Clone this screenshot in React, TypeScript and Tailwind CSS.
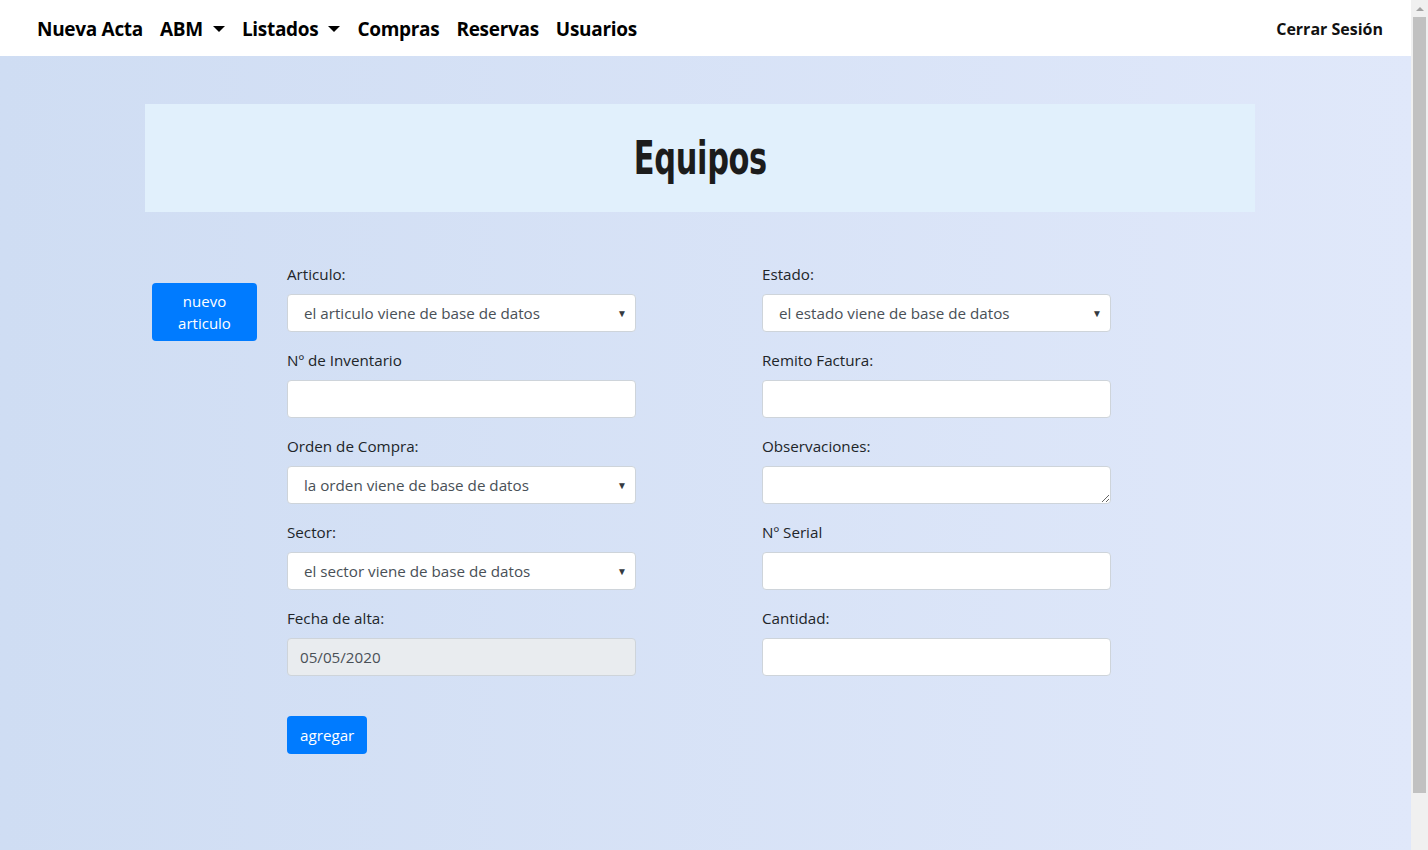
import { useState } from 'react';

const FONT = { fontFamily: '"Open Sans", "Noto Sans", Arial, sans-serif' };

function Caret() {
    return <span className="inline-block ml-[10px] align-middle border-t-[6px] border-t-black border-x-[6px] border-x-transparent mb-[3px]" />;
}

function SelectBox({ text }: { text: string }) {
    return (
        <div className="flex items-center h-[38px] bg-white rounded-[4px] border border-[#ced4da] pl-[16px] pr-[8px] text-[15.2px] text-[#495057]">
            <span className="flex-1">{text}</span>
            <span className="text-[10px] text-[#343a40]">▼</span>
        </div>
    );
}

function Field({ label, children }: { label: string; children: React.ReactNode }) {
    return (
        <div className="flex flex-col">
            <label className="h-[37px] pt-[7px] text-[15.2px] text-[#212529] leading-[20px]">{label}</label>
            {children}
        </div>
    );
}

const inputCls = 'h-[38px] bg-white rounded-[4px] border border-[#ced4da] px-3 outline-none';

export default function App() {
    const [obs, setObs] = useState('');

    return (
        <div className="flex w-[1428px] h-[850px] overflow-hidden" style={FONT}>
            <div className="flex-1 flex flex-col bg-gradient-to-r from-[#cfddf3] to-[#e0e8fa]">
                {/* navbar */}
                <nav className="h-[56px] shrink-0 bg-white flex items-center pl-[37px] pr-[28px] pt-[2px]">
                    <div className="flex items-center gap-[17px] text-[19px] font-bold text-black tracking-[-0.3px]">
                        <span>Nueva Acta</span>
                        <span>ABM<Caret /></span>
                        <span>Listados<Caret /></span>
                        <span>Compras</span>
                        <span>Reservas</span>
                        <span>Usuarios</span>
                    </div>
                    <span className="ml-auto text-[16px] font-bold text-[#111]">Cerrar Sesión</span>
                </nav>

                <div className="pl-[145px] pt-[48px]">
                    <div className="w-[1110px] h-[108px] bg-[#e1f0fc] flex items-center justify-center">
                        <h1 className="text-[47px] text-[#1c1c1c] font-black scale-x-[0.72] tracking-[-0.5px]"
                            style={{ fontFamily: '"DejaVu Sans Condensed", "Liberation Sans", sans-serif', fontStretch: 'condensed' }}>
                            Equipos
                        </h1>
                    </div>
                </div>

                <div className="flex pl-[152px] pt-[45px]">
                    <div className="w-[135px] shrink-0 pt-[26px]">
                        <button className="w-[105px] h-[58px] bg-[#007bff] text-white rounded-[4px] text-[15px] leading-[22px]">
                            nuevo<br />articulo
                        </button>
                    </div>

                    <div className="flex flex-col">
                        <div className="grid grid-cols-[349px_349px] gap-x-[126px] gap-y-[11px]">
                            <Field label="Articulo:"><SelectBox text="el articulo viene de base de datos" /></Field>
                            <Field label="Estado:"><SelectBox text="el estado viene de base de datos" /></Field>
                            <Field label="Nº de Inventario"><input className={inputCls} /></Field>
                            <Field label="Remito Factura:"><input className={inputCls} /></Field>
                            <Field label="Orden de Compra:"><SelectBox text="la orden viene de base de datos" /></Field>
                            <Field label="Observaciones:">
                                <textarea value={obs} onChange={e => setObs(e.target.value)} className={`${inputCls} resize-y block`} />
                            </Field>
                            <Field label="Sector:"><SelectBox text="el sector viene de base de datos" /></Field>
                            <Field label="Nº Serial"><input className={inputCls} /></Field>
                            <Field label="Fecha de alta:">
                                <div className="h-[38px] bg-[#e9ecef] rounded-[4px] border border-[#ced4da] pl-[12px] flex items-center text-[15.2px] text-[#495057]">05/05/2020</div>
                            </Field>
                            <Field label="Cantidad:"><input className={inputCls} /></Field>
                        </div>
                        <div className="pt-[40px]">
                            <button className="h-[38px] px-[13px] bg-[#007bff] text-white rounded-[4px] text-[15.2px]">agregar</button>
                        </div>
                    </div>
                </div>
            </div>

            {/* fake scrollbar */}
            <div className="w-[17px] shrink-0 bg-[#f0f0f0] flex flex-col items-center">
                <div className="h-[17px] flex items-center justify-center">
                    <span className="border-b-[4px] border-b-[#a3a3a3] border-x-[4px] border-x-transparent" />
                </div>
                <div className="w-[13px] h-[776px] bg-[#c1c1c1]" />
            </div>
        </div>
    );
}
